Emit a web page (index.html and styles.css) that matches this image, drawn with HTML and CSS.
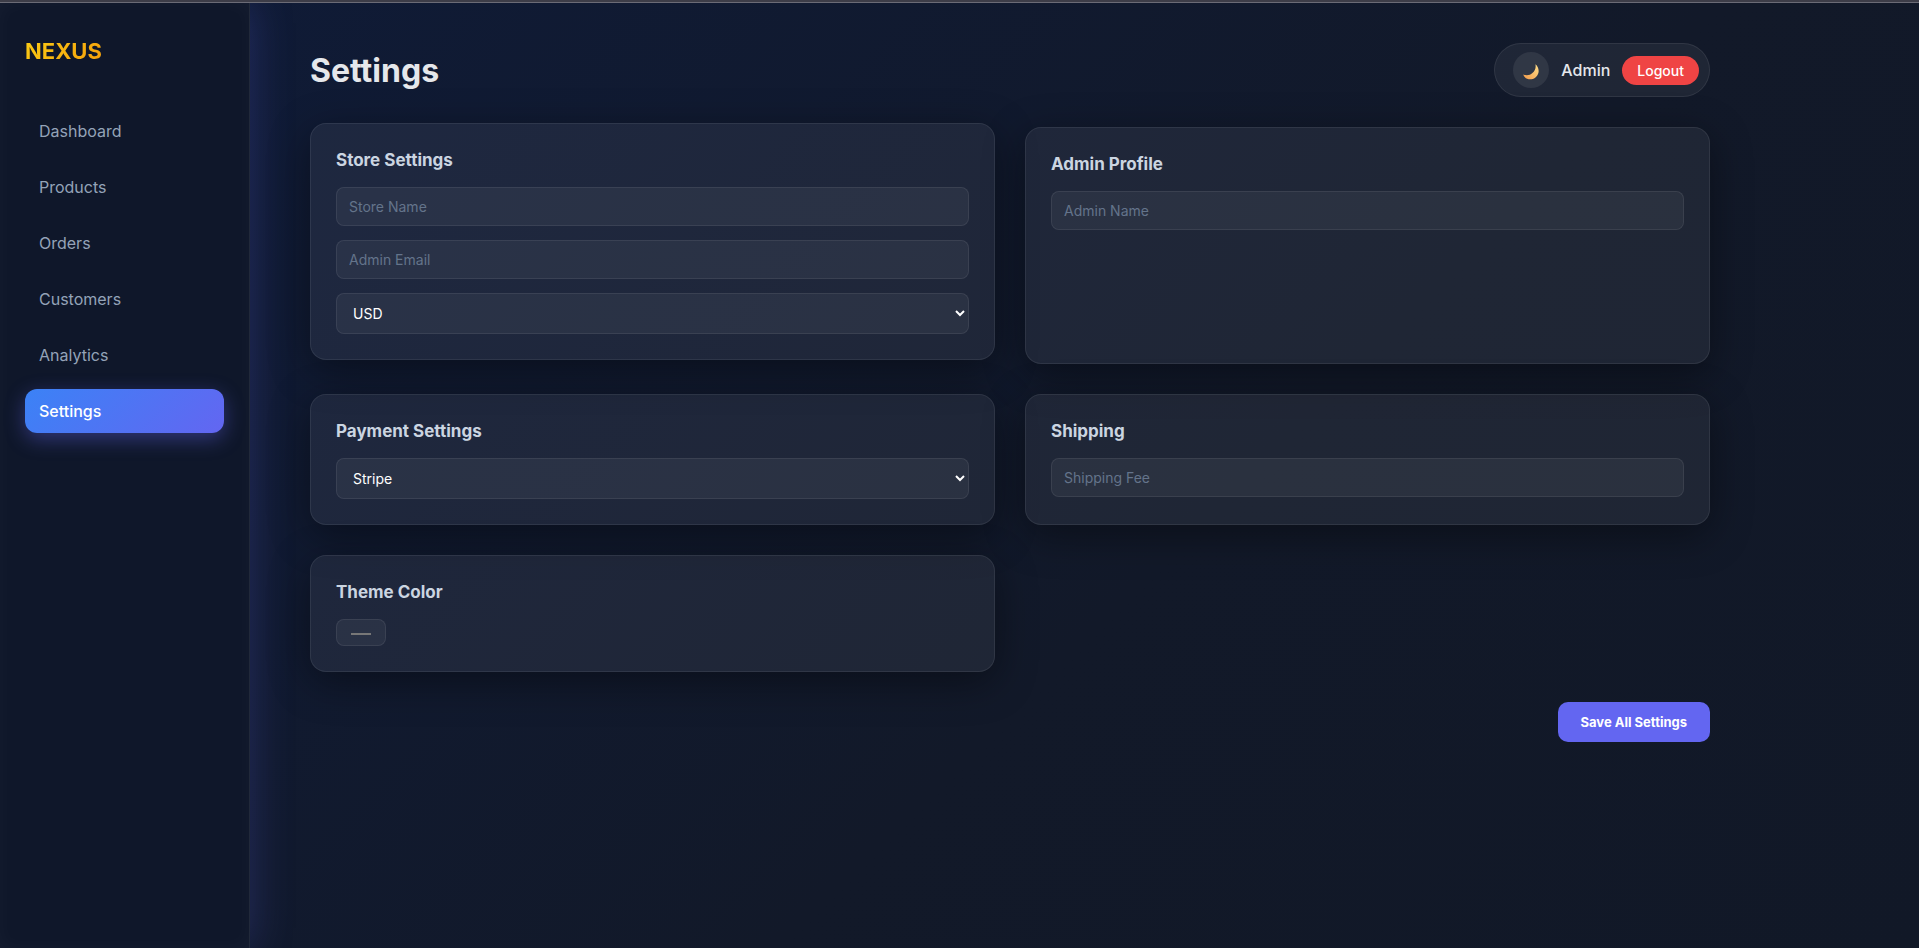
FILE: index.html
```
<!DOCTYPE html>
<html lang="en">
<head>
  <meta charset="UTF-8">
  <title>Nexus - Settings</title>
  <link rel="stylesheet" href="styles.css">
</head>
<body>

  <aside class="sidebar">
    <h2 class="logo">NEXUS</h2>
    <nav>
      <a href="#">Dashboard</a>
      <a href="#">Products</a>
      <a href="#">Orders</a>
      <a href="#">Customers</a>
      <a href="#">Analytics</a>
      <a href="#" class="active">Settings</a>
    </nav>
  </aside>

  <main class="main">
    <header class="topbar">
      <h1>Settings</h1>
      <div class="user-box">
        <button class="theme-btn" aria-label="Toggle theme">
          <svg width="16" height="16" viewBox="0 0 16 16">
            <defs>
              <linearGradient id="moon" x1="1" y1="0" x2="0" y2="1">
                <stop offset="0" stop-color="#ffe08a"/>
                <stop offset="1" stop-color="#f29a4a"/>
              </linearGradient>
            </defs>
            <path d="M12.4 0.3C15 2.2 16.3 6 15.3 9.3C14 13.6 9.8 16 5.6 15.2C3 14.7 1 13 0.2 10.6C3.6 11.8 7 11.4 9.4 9C12 6.6 13.2 3.8 12.4 0.3Z" fill="url(#moon)"/>
          </svg>
        </button>
        <span>Admin</span>
        <button class="logout-btn">Logout</button>
      </div>
    </header>

    <form class="settings-grid" id="settings-form">
      <section class="card raised">
        <h3>Store Settings</h3>
        <input type="text" placeholder="Store Name" aria-label="Store Name">
        <input type="email" placeholder="Admin Email" aria-label="Admin Email">
        <select aria-label="Currency">
          <option>USD</option>
          <option>EUR</option>
          <option>GBP</option>
        </select>
      </section>

      <section class="card">
        <h3>Admin Profile</h3>
        <input type="text" placeholder="Admin Name" aria-label="Admin Name">
      </section>

      <section class="card">
        <h3>Payment Settings</h3>
        <select aria-label="Payment provider">
          <option>Stripe</option>
          <option>PayPal</option>
        </select>
      </section>

      <section class="card">
        <h3>Shipping</h3>
        <input type="text" placeholder="Shipping Fee" aria-label="Shipping Fee">
      </section>

      <section class="card">
        <h3>Theme Color</h3>
        <input type="color" value="#808080" aria-label="Theme Color">
      </section>
    </form>

    <div class="actions">
      <button class="save-btn" type="submit" form="settings-form">Save All Settings</button>
    </div>
  </main>

</body>
</html>
```
FILE: styles.css
```
* {
  margin: 0;
  padding: 0;
  box-sizing: border-box;
  font-family: 'Inter', sans-serif;
}

body {
  display: flex;
  min-height: 100vh;
  padding-top: 1px;
  color: #e5e7eb;
  background: linear-gradient(135deg, #0f1b38, #121929 60%, #111827);
  border-top: 2px solid #3d3d48;
  box-shadow: inset 0 1px #6b6b76;
}

/* SIDEBAR */
.sidebar {
  width: 250px;
  flex-shrink: 0;
  padding: 35px 25px;
  background: #0f172a;
  border-right: 1px solid rgba(255,255,255,0.08);
  box-shadow: 0 0 40px rgba(99,102,241,0.25), inset 0 0 20px rgba(255,255,255,0.03);
  clip-path: inset(0 -60px 0 0);
}

.logo {
  width: fit-content;
  font-size: 22px;
  line-height: 27px;
  font-weight: 700;
  margin-bottom: 44px;
  background: linear-gradient(135deg, #facc15, #f59e0b);
  -webkit-background-clip: text;
  background-clip: text;
  color: transparent;
}

nav {
  display: flex;
  flex-direction: column;
  gap: 12px;
}

nav a {
  padding: 12px 14px;
  border-radius: 12px;
  line-height: 20px;
  color: #94a3b8;
  text-decoration: none;
}

nav a.active {
  color: white;
  font-weight: 500;
  background: linear-gradient(135deg, #3b82f6, #6366f1);
  box-shadow: 0 6px 20px rgba(99,102,241,0.4);
}

/* MAIN */
.main {
  flex: 1;
  max-width: 1520px;
  padding: 40px 60px;
}

.topbar {
  display: flex;
  justify-content: space-between;
  align-items: center;
  margin-bottom: 30px;
}

h1 {
  font-size: 32px;
  font-weight: 700;
}

.user-box {
  display: flex;
  align-items: center;
  gap: 12px;
  padding: 8px 10px 8px 18px;
  border-radius: 40px;
  background: rgba(255,255,255,0.06);
  border: 1px solid rgba(255,255,255,0.08);
  font-weight: 500;
}

.theme-btn {
  display: flex;
  align-items: center;
  justify-content: center;
  width: 36px;
  height: 36px;
  padding-top: 4px;
  border: none;
  border-radius: 50%;
  background: rgba(255,255,255,0.08);
  cursor: pointer;
}

.logout-btn {
  padding: 6px 15px;
  border: none;
  border-radius: 20px;
  background: #ef4444;
  color: white;
  font-size: 14px;
  font-weight: 500;
  cursor: pointer;
}

/* CARDS */
.settings-grid {
  display: grid;
  grid-template-columns: 1fr 1fr;
  gap: 30px;
}

.card {
  display: flex;
  flex-direction: column;
  align-items: flex-start;
  gap: 14px;
  padding: 25px;
  border-radius: 16px;
  background: rgba(255,255,255,0.06);
  border: 1px solid rgba(255,255,255,0.08);
  box-shadow: 0 10px 40px rgba(0,0,0,0.4);
}

.card.raised {
  transform: translateY(-4px);
}

.card h3 {
  font-size: 17px;
  line-height: 22px;
  margin-bottom: 2px;
  color: #cbd5e1;
}

.card input,
.card select {
  width: 100%;
  padding: 10px 12px;
  border-radius: 8px;
  border: 1px solid rgba(255,255,255,0.08);
  background: rgba(255,255,255,0.05);
  color: white;
  font-size: 14px;
}

.card select {
  height: 41px;
}

.card input::placeholder {
  color: #64748b;
}

.card option {
  background: #111827;
}

.card input[type="color"] {
  width: 50px;
  height: 27px;
}

.actions {
  display: flex;
  justify-content: flex-end;
  margin-top: 30px;
}

.save-btn {
  padding: 12px 23px;
  border: none;
  border-radius: 10px;
  background: #6366f1;
  color: white;
  font-size: 13px;
  font-weight: 700;
  cursor: pointer;
}
```
